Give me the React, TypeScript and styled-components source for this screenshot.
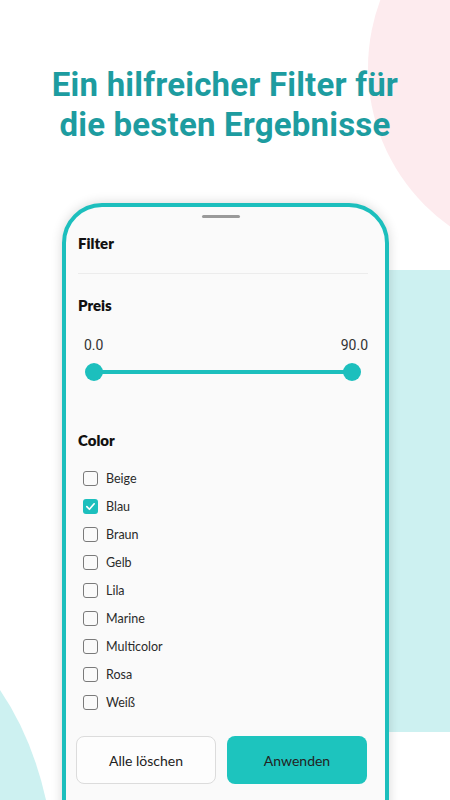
import React from "react";
import styled, { createGlobalStyle } from "styled-components";

const Global = createGlobalStyle`
  html, body { margin: 0; padding: 0; background: #fff; }
  * { box-sizing: border-box; }
`;

const Page = styled.div`
  position: relative;
  width: 450px;
  height: 800px;
  overflow: hidden;
  background: #ffffff;
  font-family: "Lato", "Roboto", sans-serif;
`;

const Backdrop = styled.svg`
  position: absolute;
  left: 0;
  top: 0;
  width: 450px;
  height: 800px;
  z-index: 0;
`;

const Content = styled.div`
  position: relative;
  z-index: 1;
  display: flex;
  flex-direction: column;
  align-items: flex-start;
`;

const Headline = styled.h1`
  margin: 65px 0 0 0;
  width: 450px;
  text-align: center;
  font-family: "Roboto", sans-serif;
  font-weight: 700;
  font-size: 33px;
  line-height: 40px;
  color: #1d9ca0;
  letter-spacing: 0.2px;
`;

const Phone = styled.div`
  margin: 58px 0 0 62px;
  width: 327px;
  height: 640px;
  border: 4px solid #1cbfbd;
  border-radius: 40px;
  background: #fafafa;
  box-shadow: 0 0 12px rgba(0, 0, 0, 0.16);
  display: flex;
  flex-direction: column;
  padding: 0 17px 0 12px;
`;

const Handle = styled.div`
  align-self: center;
  margin-top: 8px;
  margin-left: -4px;
  width: 38px;
  height: 3px;
  border-radius: 2px;
  background: #9a9a9a;
`;

const SectionTitle = styled.div<{ $top: number }>`
  margin-top: ${(p) => p.$top}px;
  height: 20px;
  line-height: 20px;
  font-size: 15px;
  font-weight: 800;
  color: #111;
`;

const Divider = styled.div`
  margin-top: 20px;
  height: 1px;
  background: #ececec;
`;

const RangeLabels = styled.div`
  margin-top: 21px;
  display: flex;
  justify-content: space-between;
  padding-left: 6px;
  height: 18px;
  line-height: 18px;
  font-family: "Roboto", sans-serif;
  font-size: 14px;
  color: #333;
`;

const Slider = styled.div`
  margin: 8px 16px 0 16px;
  height: 20px;
  position: relative;
  display: flex;
  align-items: center;
`;

const Track = styled.div`
  flex: 1;
  height: 4px;
  background: #1cbfbd;
  border-radius: 2px;
`;

const Thumb = styled.div<{ $side: "left" | "right" }>`
  position: absolute;
  top: 1px;
  ${(p) => (p.$side === "left" ? "left: -9px;" : "right: -9px;")}
  width: 18px;
  height: 18px;
  border-radius: 50%;
  background: #1cbfbd;
`;

const List = styled.div`
  margin-top: 14px;
  display: flex;
  flex-direction: column;
`;

const Row = styled.label`
  height: 28px;
  display: flex;
  align-items: center;
  gap: 8px;
  padding-left: 5px;
  font-size: 12.5px;
  font-weight: 400;
  color: #2a2a2a;
`;

const Box = styled.span<{ $checked: boolean }>`
  width: 15px;
  height: 15px;
  border-radius: 3px;
  border: ${(p) => (p.$checked ? "none" : "1.8px solid #7a7a7a")};
  background: ${(p) => (p.$checked ? "#1cbfbd" : "transparent")};
  display: flex;
  align-items: center;
  justify-content: center;
`;

const Buttons = styled.div`
  margin-top: 20px;
  margin-left: -2px;
  display: grid;
  grid-template-columns: 140px 140px;
  column-gap: 11px;
`;

const Button = styled.button<{ $primary?: boolean }>`
  height: 48px;
  border-radius: 8px;
  border: ${(p) => (p.$primary ? "none" : "1px solid #dcdcdc")};
  background: ${(p) => (p.$primary ? "#1dc4be" : "#fdfdfd")};
  font-family: "Lato", sans-serif;
  font-size: 14px;
  color: #222;
  cursor: pointer;
`;

const colors = ["Beige", "Blau", "Braun", "Gelb", "Lila", "Marine", "Multicolor", "Rosa", "Weiß"];

export default function App() {
  return (
    <>
      <Global />
      <Page>
        <Backdrop viewBox="0 0 450 800">
          <circle cx="562" cy="68" r="194" fill="#fdebee" />
          <rect x="330" y="270" width="140" height="462" rx="16" fill="#cdf1f1" />
          <path d="M0,690 Q32,737 46,800 L0,800 Z" fill="#cdf1f1" />
        </Backdrop>
        <Content>
          <Headline>
            Ein hilfreicher Filter für
            <br />
            die besten Ergebnisse
          </Headline>
          <Phone>
            <Handle />
            <SectionTitle $top={15}>Filter</SectionTitle>
            <Divider />
            <SectionTitle $top={21}>Preis</SectionTitle>
            <RangeLabels>
              <span>0.0</span>
              <span>90.0</span>
            </RangeLabels>
            <Slider>
              <Track />
              <Thumb $side="left" />
              <Thumb $side="right" />
            </Slider>
            <SectionTitle $top={48}>Color</SectionTitle>
            <List>
              {colors.map((c) => {
                const checked = c === "Blau";
                return (
                  <Row key={c}>
                    <Box $checked={checked}>
                      {checked && (
                        <svg width="11" height="11" viewBox="0 0 12 12">
                          <path d="M2 6.2 L4.8 9 L10 3" fill="none" stroke="#fff" strokeWidth="1.8" strokeLinecap="round" strokeLinejoin="round" />
                        </svg>
                      )}
                    </Box>
                    {c}
                  </Row>
                );
              })}
            </List>
            <Buttons>
              <Button>Alle löschen</Button>
              <Button $primary>Anwenden</Button>
            </Buttons>
          </Phone>
        </Content>
      </Page>
    </>
  );
}
